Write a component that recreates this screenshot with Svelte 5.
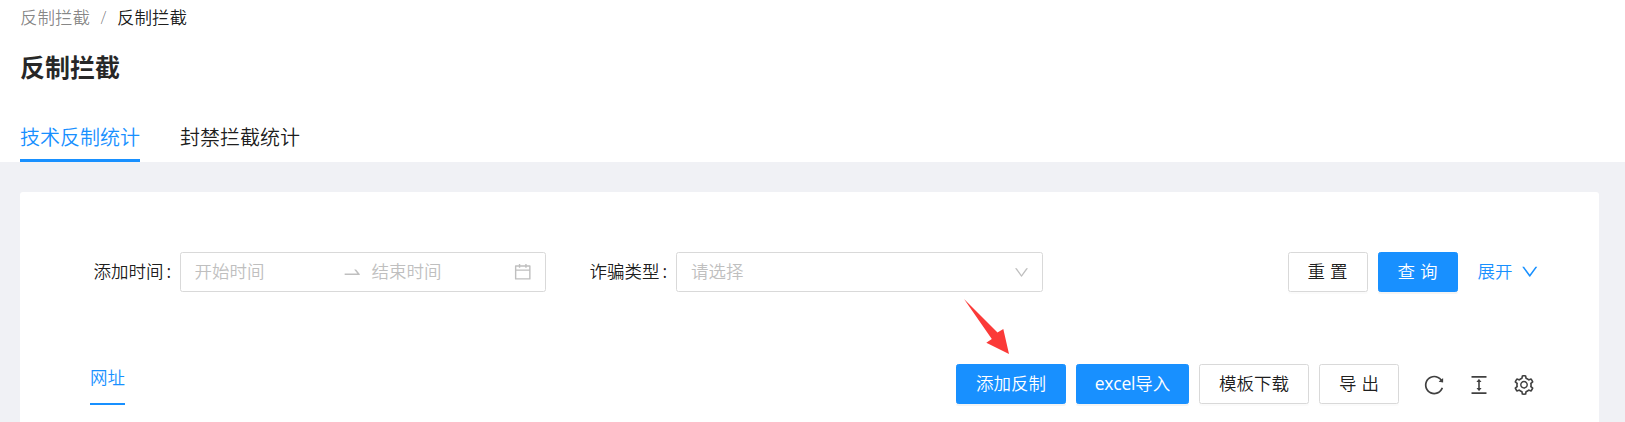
<script>
  const icons = {
    down: 'M884 256h-75c-5.1 0-9.9 2.5-12.9 6.6L512 654.2 227.9 262.6c-3-4.1-7.8-6.6-12.9-6.6h-75c-6.5 0-10.3 7.4-6.5 12.7l352.6 486.1c12.8 17.6 39 17.6 51.7 0l352.6-486.1c3.9-5.3.1-12.7-6.4-12.7z',
    swap: 'M873.1 596.2l-164-208A32 32 0 00684 376h-64.8c-6.7 0-10.4 7.7-6.3 13l144.3 183H152c-4.4 0-8 3.6-8 8v60c0 4.4 3.6 8 8 8h695.9c26.8 0 41.7-30.8 25.2-51.8z',
    calendar: 'M880 184H712v-64c0-4.4-3.6-8-8-8h-56c-4.4 0-8 3.6-8 8v64H384v-64c0-4.4-3.6-8-8-8h-56c-4.4 0-8 3.6-8 8v64H144c-17.7 0-32 14.3-32 32v664c0 17.7 14.3 32 32 32h736c17.7 0 32-14.3 32-32V216c0-17.7-14.3-32-32-32zm-40 656H184V460h656v380zM184 392V256h128v48c0 4.4 3.6 8 8 8h56c4.4 0 8-3.6 8-8v-48h256v48c0 4.4 3.6 8 8 8h56c4.4 0 8-3.6 8-8v-48h128v136H184z',
    reload: 'M909.1 209.3l-56.4 44.1C775.8 155.1 656.2 92 521.9 92 290 92 102.3 279.5 102 511.5 101.7 743.7 289.8 932 521.9 932c181.3 0 335.8-115 394.6-276.1 1.5-4.2-.7-8.9-4.9-10.3l-56.7-19.5a8 8 0 00-10.1 4.8c-1.8 5-3.8 10-5.9 14.9-17.3 41-42.1 77.8-73.7 109.4A344.77 344.77 0 01655.9 829c-42.3 17.9-87.4 27-133.8 27-46.5 0-91.5-9.1-133.8-27A341.5 341.5 0 01279 755.2a342.16 342.16 0 01-73.7-109.4c-17.9-42.4-27-87.4-27-133.9s9.1-91.5 27-133.9c17.3-41 42.1-77.8 73.7-109.4 31.6-31.6 68.4-56.4 109.3-73.8 42.3-17.9 87.4-27 133.8-27 46.5 0 91.5 9.1 133.8 27a341.5 341.5 0 01109.3 73.8c9.9 9.9 19.2 20.4 27.8 31.4l-60.2 47a8 8 0 003 14.1l175.6 43c5 1.2 9.9-2.6 9.9-7.7l.8-180.9c-.1-6.6-7.8-10.3-13-6.2z',
    height: 'M840 836H184c-4.4 0-8 3.6-8 8v60c0 4.4 3.6 8 8 8h656c4.4 0 8-3.6 8-8v-60c0-4.4-3.6-8-8-8zm0-724H184c-4.4 0-8 3.6-8 8v60c0 4.4 3.6 8 8 8h656c4.4 0 8-3.6 8-8v-60c0-4.4-3.6-8-8-8zM610.8 378c6 0 9.4-7 5.7-11.7L515.7 238.7a7.14 7.14 0 00-11.3 0L403.6 366.3a7.23 7.23 0 005.7 11.7H476v268h-62.8c-6 0-9.4 7-5.7 11.7l100.8 127.5c2.9 3.7 8.5 3.7 11.3 0l100.8-127.5c3.7-4.7.4-11.7-5.7-11.7H548V378h62.8z',
    setting: 'M924.8 625.7l-65.5-56c3.1-19 4.7-38.4 4.7-57.8s-1.6-38.8-4.7-57.8l65.5-56a32.03 32.03 0 009.3-35.2l-.9-2.6a443.74 443.74 0 00-79.7-137.9l-1.8-2.1a32.12 32.12 0 00-35.1-9.5l-81.3 28.9c-30-24.6-63.5-44-99.7-57.6l-15.7-85a32.05 32.05 0 00-25.8-25.7l-2.7-.5c-52.1-9.4-106.9-9.4-159 0l-2.7.5a32.05 32.05 0 00-25.8 25.7l-15.8 85.4a351.86 351.86 0 00-99 57.4l-81.9-29.1a32 32 0 00-35.1 9.5l-1.8 2.1a446.02 446.02 0 00-79.7 137.9l-.9 2.6c-4.5 12.5-.8 26.5 9.3 35.2l66.3 56.6c-3.1 18.8-4.6 38-4.6 57.1 0 19.2 1.5 38.4 4.6 57.1L99 625.5a32.03 32.03 0 00-9.3 35.2l.9 2.6c18.1 50.4 44.9 96.9 79.7 137.9l1.8 2.1a32.12 32.12 0 0035.1 9.5l81.9-29.1c29.8 24.5 63.1 43.9 99 57.4l15.8 85.4a32.05 32.05 0 0025.8 25.7l2.7.5a449.4 449.4 0 00159 0l2.7-.5a32.05 32.05 0 0025.8-25.7l15.7-85a350 350 0 0099.7-57.6l81.3 28.9a32 32 0 0035.1-9.5l1.8-2.1c34.8-41.1 61.6-87.5 79.7-137.9l.9-2.6c4.5-12.3.8-26.3-9.3-35zM788.3 465.9c2.5 15.1 3.8 30.6 3.8 46.1s-1.3 31-3.8 46.1l-6.6 40.1 74.7 63.9a370.03 370.03 0 01-42.6 73.6L721 702.8l-31.4 25.8c-23.9 19.6-50.5 35-79.3 45.8l-38.1 14.3-17.9 97a377.5 377.5 0 01-85 0l-17.9-97.2-37.8-14.5c-28.5-10.8-55-26.2-78.7-45.7l-31.4-25.9-93.4 33.2c-17-22.9-31.2-47.6-42.6-73.6l75.5-64.5-6.5-40c-2.4-14.9-3.7-30.3-3.7-45.5 0-15.3 1.2-30.6 3.7-45.5l6.5-40-75.5-64.5c11.3-26.1 25.6-50.7 42.6-73.6l93.4 33.2 31.4-25.9c23.7-19.5 50.2-34.9 78.7-45.7l37.9-14.3 17.9-97.2c28.1-3.2 56.8-3.2 85 0l17.9 97 38.1 14.3c28.7 10.8 55.4 26.2 79.3 45.8l31.4 25.8 92.8-32.9c17 22.9 31.2 47.6 42.6 73.6L781.8 426l6.5 39.9zM512 326c-97.2 0-176 78.8-176 176s78.8 176 176 176 176-78.8 176-176-78.8-176-176-176zm79.2 255.2A111.6 111.6 0 01512 614c-29.9 0-58-11.7-79.2-32.8A111.6 111.6 0 01400 502c0-29.9 11.7-58 32.8-79.2C454 401.6 482.1 390 512 390c29.9 0 58 11.6 79.2 32.8A111.6 111.6 0 01624 502c0 29.9-11.7 58-32.8 79.2z'
  };
</script>

{#snippet icon(name, size)}
  <svg class="icon" width={size} height={size} viewBox="64 64 896 896" fill="currentColor" aria-hidden="true"><path d={icons[name]} /></svg>
{/snippet}

<div class="page">
  <header>
    <nav class="breadcrumb"><span class="parent">反制拦截</span><span class="slash">/</span><span>反制拦截</span></nav>
    <h1>反制拦截</h1>
    <div class="tabs">
      <div class="tab active">技术反制统计</div>
      <div class="tab">封禁拦截统计</div>
    </div>
  </header>

  <main>
    <form class="filters" onsubmit={(e) => e.preventDefault()}>
      <div class="label first">添加时间<i>:</i></div>
      <div class="field range">
        <span class="start">开始时间</span>
        {@render icon('swap', 18.5)}
        <span class="end">结束时间</span>
        {@render icon('calendar', 17.5)}
      </div>
      <div class="label second">诈骗类型<i>:</i></div>
      <div class="field select">
        <span>请选择</span>
        {@render icon('down', 15)}
      </div>
      <div class="actions">
        <button class="short">重置</button>
        <button class="short primary">查询</button>
        <a href="#expand">展开{@render icon('down', 17.5)}</a>
      </div>
    </form>

    <div class="toolbar">
      <div class="subtab">网址</div>
      <div class="tools">
        <button class="primary">添加反制</button>
        <button class="primary excel"><span>excel</span>导入</button>
        <button>模板下载</button>
        <button class="short">导出</button>
        <div class="icons">
          {@render icon('reload', 20)}
          {@render icon('height', 20)}
          {@render icon('setting', 20)}
        </div>
      </div>
      <svg class="pointer" width="48" height="58" viewBox="0 0 48 58" aria-hidden="true">
        <path d="M1 1L34.5 34.5 40.3 31 46 56 23.3 44.8 28.8 41Z" fill="#fb3a38" />
      </svg>
    </div>
  </main>
</div>

<style>
  :global(body) { margin: 0; background: #f0f1f5; }
  * { box-sizing: border-box; }
  .page {
    height: 422px;
    overflow: hidden;
    background: #f0f1f5;
    color: rgba(0, 0, 0, 0.9);
    font: 350 17.5px/27.5px "Open Sans", "Noto Sans CJK SC", sans-serif;
    white-space: nowrap;
  }
  header { height: 162px; padding: 4px 20px 0; background: #fff; }
  .breadcrumb { display: flex; height: 27px; }
  .parent, .slash { color: rgba(0, 0, 0, 0.48); }
  .slash { width: 27px; text-align: center; }
  h1 { margin: 16px 0 0; font-size: 25px; line-height: 40px; font-weight: 700; color: rgba(0, 0, 0, 0.85); }
  .tabs { display: flex; gap: 40px; margin-top: 30px; font-size: 20px; line-height: 42px; }
  .tab { height: 45px; }
  .active { color: #1890ff; border-bottom: 3px solid #1890ff; }
  main { height: 240px; margin: 30px 26px 0 20px; background: #fff; border-radius: 3px 3px 0 0; }
  .filters { display: flex; align-items: center; height: 160px; }
  .label { display: flex; }
  .label i { margin-left: 3px; font-style: normal; font-weight: 400; }
  .first { width: 86.5px; margin-left: 73.5px; }
  .second { width: 86.5px; margin-left: 43.5px; }
  .icon { display: block; flex: none; }
  .field {
    display: flex;
    align-items: center;
    height: 40px;
    border: 1px solid #d9d9d9;
    border-radius: 2.5px;
    color: #bfbfbf;
  }
  .range { width: 366px; padding: 0 14px 0 13.5px; }
  .start { width: 148px; }
  .end { flex: 1; margin-left: 10.5px; }
  .select { width: 367px; padding: 0 13px 0 14px; justify-content: space-between; }
  .actions { display: flex; gap: 10px; margin-left: auto; padding-right: 61px; }
  button {
    height: 40px;
    padding: 0 19px;
    border: 1px solid #d9d9d9;
    border-radius: 2.5px;
    background: #fff;
    color: inherit;
    font: inherit;
    box-shadow: 0 2px 0 rgba(0, 0, 0, 0.016);
  }
  .short { width: 80px; padding: 0 0 0 5px; letter-spacing: 5px; }
  .primary { border-color: #1890ff; background: #1890ff; color: #fff; box-shadow: 0 2px 0 rgba(0, 0, 0, 0.045); }
  .excel { width: 113px; padding: 0; }
  .excel span { font-weight: 400; letter-spacing: -0.2px; }
  a { display: flex; align-items: center; gap: 8px; margin-left: 10px; color: #1890ff; text-decoration: none; }
  .toolbar { position: relative; display: flex; justify-content: space-between; padding: 12px 65px 0 70px; }
  .subtab { height: 41px; line-height: 26px; border-bottom: 2px solid #1890ff; color: #1890ff; }
  .tools { display: flex; gap: 10px; }
  .icons { display: flex; align-items: center; gap: 25px; margin-left: 15px; color: rgba(0, 0, 0, 0.75); }
  .pointer { position: absolute; left: 943px; top: -54px; }
</style>
